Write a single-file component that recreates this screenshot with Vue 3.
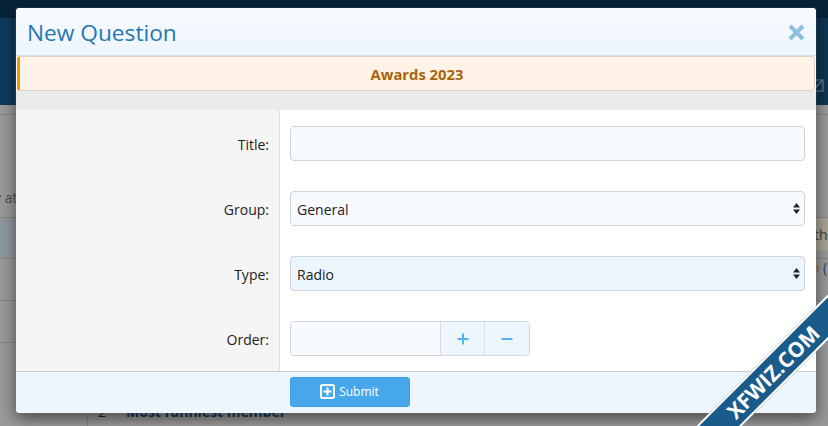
<script setup>
const fields = [
  { label: 'Title:', kind: 'text' },
  { label: 'Group:', kind: 'select', value: 'General' },
  { label: 'Type:', kind: 'select', value: 'Radio', tint: true },
  { label: 'Order:', kind: 'number' }
]
</script>

<template>
  <div class="page">
    <div class="bg-top"></div>
    <div class="bg-banner">
      <svg class="bg-icon" width="13" height="13" viewBox="0 0 13 13"><rect x="1" y="1" width="11" height="11" fill="none" stroke="#5f7f98" stroke-width="1.2"/><path d="M3 10 11 2" stroke="#5f7f98" stroke-width="1.2"/></svg>
    </div>
    <div class="bg-content">
      <span class="bg-row-line l0"></span>
      <div class="bg-hl-left"></div>
      <div class="bg-hl-right"></div>
      <span class="bg-text bg-at">y at</span>
      <span class="bg-text bg-the">the</span>
      <span class="bg-text bg-paren"><em>o</em> (</span>
      <span class="bg-row-line l1"></span>
      <span class="bg-row-line l2"></span>
      <span class="bg-row-line l3"></span>
      <span class="bg-row-line l4"></span>
      <span class="bg-item"><i>2</i><b>Most funniest member</b></span>
    </div>

    <section class="modal">
      <header class="head">
        <h1>New Question</h1>
        <svg class="close" width="17" height="17" viewBox="0 0 17 17"><path d="M2 2 15 15M15 2 2 15" stroke="#8dbfdf" stroke-width="4"/></svg>
      </header>
      <div class="notice">Awards 2023</div>
      <div class="band"></div>
      <div class="form">
        <div v-for="f in fields" :key="f.label" class="row">
          <div class="label">{{ f.label }}</div>
          <div class="control">
            <div v-if="f.kind === 'text'" class="input"></div>
            <div v-else-if="f.kind === 'select'" class="input select" :class="{ tint: f.tint }">
              <span class="select-value">{{ f.value }}</span>
              <svg width="7" height="11" viewBox="0 0 7 11"><path d="M3.5 0 7 4.5H0zM3.5 11 0 6.5H7z" fill="#222"/></svg>
            </div>
            <div v-else class="num">
              <div class="num-input"></div>
              <div class="step"><svg width="12" height="12" viewBox="0 0 12 12"><path d="M6 0.5v11M0.5 6h11" stroke="#55b1f5" stroke-width="2"/></svg></div>
              <div class="step"><svg width="12" height="12" viewBox="0 0 12 12"><path d="M0.5 6h11" stroke="#55b1f5" stroke-width="2"/></svg></div>
            </div>
          </div>
        </div>
      </div>
      <footer class="foot">
        <div class="foot-spacer"></div>
        <button class="submit">
          <svg width="15" height="15" viewBox="0 0 15 15"><rect x="1" y="1" width="13" height="13" rx="1.5" fill="none" stroke="#fff" stroke-width="2"/><path d="M7.5 3.5v8M3.5 7.5h8" stroke="#fff" stroke-width="2"/></svg>
          <span>Submit</span>
        </button>
      </footer>
    </section>

    <div class="ribbon"><span>XFWIZ.COM</span></div>
  </div>
</template>

<style>
html, body { margin: 0; overflow: hidden; }
</style>

<style scoped>
.page {
  position: relative;
  width: 828px;
  height: 426px;
  overflow: hidden;
  font-family: "Open Sans", "Noto Sans", sans-serif;
  background: #999;
}
.bg-top { height: 18px; background: #07233a; }
.bg-banner { position: relative; height: 87px; background: linear-gradient(90deg, #0f3a5c, #0d3553); }
.bg-icon { position: absolute; left: 811px; top: 61px; }
.bg-content { position: relative; height: 321px; }
.bg-hl-left { position: absolute; left: 0; width: 16px; top: 112px; height: 41px; background: #8f979e; }
.bg-hl-right { position: absolute; left: 816px; width: 12px; top: 113px; height: 32px; background: #a8a594; }
.bg-text { position: absolute; font-size: 14px; color: #4d4d4d; }
.bg-at { left: -6px; top: 83px; }
.bg-the { left: 814px; top: 120px; color: #3d3d3d; }
.bg-paren { left: 811px; top: 153px; color: #2f4858; }
.bg-paren em { font-style: normal; color: #a3660f; }
.bg-row-line { position: absolute; left: 0; right: 0; height: 1px; background: #858585; }
.l0 { top: 9px; }
.l1 { top: 112px; }
.l2 { top: 153px; }
.l3 { top: 195px; }
.l4 { top: 237px; }
.bg-item { position: absolute; left: 87px; top: 297px; font-size: 14px; border-left: 1px solid #858585; padding-left: 10px; height: 30px; }
.bg-item i { font-style: normal; color: #222; margin-right: 20px; }
.bg-item b { color: #0f3a5c; }

.modal {
  position: absolute;
  left: 16px;
  top: 8px;
  width: 800px;
  height: 405px;
  display: flex;
  flex-direction: column;
  background: #fff;
  border-radius: 4px;
  box-shadow: 0 0 1px #bbb, 0 5px 15px rgba(0, 0, 0, .55);
}
.head {
  height: 48px;
  flex: none;
  box-sizing: border-box;
  display: flex;
  align-items: center;
  justify-content: space-between;
  padding: 2px 11px 0 11px;
  background: linear-gradient(#f8fbff, #edf5fd);
  border-radius: 4px 4px 0 0;
  border-bottom: 1px solid #dcdfe3;
}
.head h1 { margin: 0; font-weight: 400; font-size: 22.7px; color: #2577b1; }
.notice {
  flex: none;
  height: 35px;
  box-sizing: border-box;
  margin: 0 1px;
  display: flex;
  align-items: center;
  justify-content: center;
  font-size: 14.8px;
  font-weight: 700;
  color: #a9640a;
  background: #fef3e6;
  border: 1px solid #d8d4cc;
  border-left: 3px solid #f3960f;
  border-radius: 3px;
}
.band { flex: none; height: 19px; background: #ebebeb; }
.form {
  flex: 1;
  display: flex;
  flex-direction: column;
  background: linear-gradient(90deg, #f5f5f5 263px, #dfdfdf 263px, #dfdfdf 264px, #fff 264px);
}
.row { display: flex; height: 65px; align-items: center; padding-top: 2px; box-sizing: border-box; }
.label { width: 253px; flex: none; padding-top: 1px; text-align: right; font-size: 14px; color: #222; }
.control { margin-left: 21px; width: 515px; }
.input {
  height: 35px;
  box-sizing: border-box;
  background: #f7fbff;
  border: 1px solid #cfd3d7;
  border-radius: 4px;
}
.select {
  display: flex;
  align-items: center;
  justify-content: space-between;
  padding: 0 4px 0 6px;
  font-size: 14px;
  color: #222;
}
.select-value { padding-top: 1px; }
.select.tint { background: #edf5fd; }
.num { display: flex; width: 240px; height: 35px; box-sizing: border-box; border: 1px solid #d2d6da; border-radius: 4px; overflow: hidden; }
.num-input { width: 149px; background: #f7fbff; }
.step {
  width: 44px;
  box-sizing: border-box;
  display: flex;
  align-items: center;
  justify-content: center;
  background: #edf5fd;
  border-left: 1px solid #d9dde0;
}
.step:last-child { flex: 1; }
.foot {
  flex: none;
  height: 42px;
  box-sizing: border-box;
  display: flex;
  align-items: center;
  padding-bottom: 2px;
  background: #edf5fd;
  border-top: 1px solid #c9ccd0;
  border-radius: 0 0 4px 4px;
}
.foot-spacer { width: 274px; }
.submit {
  width: 120px;
  height: 30px;
  display: flex;
  align-items: center;
  justify-content: center;
  gap: 4px;
  padding: 0 1px 0 0;
  font: 12px "Open Sans", "Noto Sans", sans-serif;
  color: #fff;
  background: #47a7eb;
  border: 1px solid #3f9ee2;
  border-radius: 3px;
}
.ribbon {
  position: absolute;
  left: 623px;
  top: 356px;
  width: 300px;
  height: 32px;
  box-sizing: border-box;
  transform: rotate(-45deg);
  background: #1a5b8a;
  border-top: 2px solid #fff;
  border-bottom: 2px solid #fff;
  display: flex;
  align-items: center;
  justify-content: center;
  font: 700 21px "Open Sans", sans-serif;
  color: #fff;
}
</style>
